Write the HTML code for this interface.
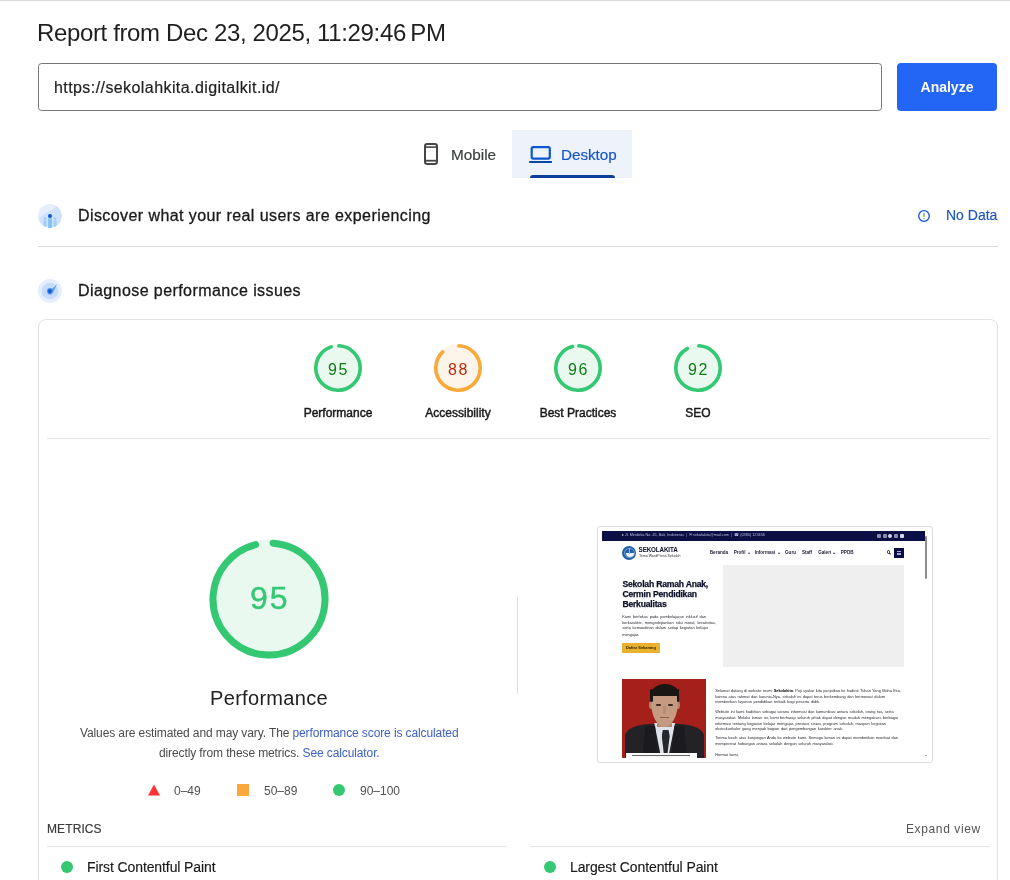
<!DOCTYPE html>
<html><head><meta charset="utf-8">
<style>
*{margin:0;padding:0;box-sizing:border-box}
html,body{width:1010px;height:880px;overflow:hidden;background:#fff;}body{will-change:transform;font-family:"Liberation Sans",sans-serif;color:#1f1f1f}
.a{position:absolute;white-space:nowrap}
#topline{left:0;top:0;width:1010px;height:1px;background:#d9d9d9}
#title{left:37px;top:18px;font-size:24px;line-height:30px;letter-spacing:-0.36px;color:#1f1f1f}
#input{left:38px;top:63px;width:844px;height:48px;border:1px solid #747775;border-radius:3.5px}
#url{left:54px;top:79px;font-size:16px;line-height:18px;letter-spacing:0.42px;color:#1f1f1f;-webkit-text-stroke:0.2px #1f1f1f}
#btn{left:897px;top:63px;width:100px;height:48px;background:#2365f5;border-radius:4px}
#btntxt{left:897px;top:79.4px;width:100px;text-align:center;font-size:14px;line-height:16px;font-weight:bold;color:#fff}
#tabbg{left:512px;top:130px;width:120px;height:48px;background:#eef3fb}
#tabline{left:530px;top:175px;width:85px;height:3px;background:#0d3f98;border-radius:3px 3px 0 0}
#mob{left:451px;top:147px;font-size:15.3px;line-height:16px;color:#3c3f3e;-webkit-text-stroke:0.2px #3c3f3e}
#desk{left:561px;top:147px;font-size:15.2px;line-height:16px;color:#1656c9;-webkit-text-stroke:0.2px #1656c9}
.sect{font-size:16px;line-height:20px;letter-spacing:0.42px;color:#1a1a1a;-webkit-text-stroke:0.3px #1a1a1a}
#nodata{left:946px;top:207px;font-size:14px;line-height:16px;color:#1b55c4;-webkit-text-stroke:0.15px #1b55c4}
#div1{left:38px;top:246px;width:960px;height:1px;background:#dadce0}
#card{left:38px;top:319px;width:960px;height:600px;border:1px solid #e2e2e2;border-radius:8px}
#div2{left:47px;top:438px;width:943px;height:1px;background:#e5e5e5}
.glabel{font-size:12px;line-height:14px;color:#1a1a1a;text-align:center;width:120px;-webkit-text-stroke:0.45px #1a1a1a}
.gnum{font-size:16px;line-height:18px;letter-spacing:1.5px}
#vdiv{left:517px;top:597px;width:1px;height:97px;background:#e0e0e0}
#ptitle{left:169px;top:686px;width:200px;text-align:center;font-size:20px;line-height:24px;letter-spacing:0.3px;color:#212121}
.desc{font-size:12px;line-height:20px;letter-spacing:-0.11px;color:#4a4a4a}
.desc span{color:#3d60c4}
.leg{font-size:12px;line-height:14px;color:#505050}
#metrics{left:47px;top:822px;font-size:12px;line-height:14px;letter-spacing:0.1px;color:#3c3c3c;-webkit-text-stroke:0.2px #3c3c3c}
#expand{left:906px;top:822px;font-size:12px;line-height:14px;letter-spacing:0.62px;color:#555}
#mdivL{left:47px;top:846px;width:459px;height:1px;background:#e5e5e5}
#mdivR{left:530px;top:846px;width:460px;height:1px;background:#e5e5e5}
.dot{width:12px;height:12px;border-radius:50%;background:#33c871}
.mname{font-size:14px;line-height:16px;letter-spacing:-0.1px;color:#1a1a1a;-webkit-text-stroke:0.15px #1a1a1a}
/* thumbnail */
#thumb{left:597px;top:526px;width:336px;height:237px;border:1px solid #dcdcdc;border-radius:3px;background:#fff;overflow:hidden}
.t{position:absolute;white-space:nowrap}
.tb{font-size:3.8px;line-height:4.5px;color:#b9bdd8;text-align-last:justify}
.nav{font-size:4.6px;line-height:5px;font-weight:bold;color:#23263a;text-align-last:justify}
.hh{font-size:8.6px;line-height:10px;font-weight:bold;color:#0b0f26;text-align-last:justify;letter-spacing:-0.2px;-webkit-text-stroke:0.25px #0b0f26}
.pp{font-size:3.9px;line-height:5px;color:#26282e;text-align-last:justify}
.pp b{color:#000}
</style></head><body>
<div class="a" id="topline"></div>
<div class="a" id="title">Report from Dec 23, 2025, 11:29:46&#8239;PM</div>
<div class="a" id="input"></div>
<div class="a" id="url">https://sekolahkita.digitalkit.id/</div>
<div class="a" id="btn"></div>
<div class="a" id="btntxt">Analyze</div>

<div class="a" id="tabbg"></div>
<div class="a" id="tabline"></div>
<svg class="a" style="left:422px;top:142px" width="18" height="24" viewBox="0 0 18 24">
 <rect x="3" y="2" width="12" height="20" rx="2.2" fill="none" stroke="#444746" stroke-width="2"/>
 <rect x="3" y="4.3" width="12" height="1.6" fill="#444746"/>
 <rect x="3" y="17.8" width="12" height="1.8" fill="#444746"/>
</svg>
<div class="a" id="mob">Mobile</div>
<svg class="a" style="left:528px;top:145px" width="26" height="20" viewBox="0 0 26 20">
 <rect x="3.7" y="2.2" width="18.1" height="11.4" rx="1.5" fill="none" stroke="#0b57d0" stroke-width="2.2"/>
 <rect x="1.2" y="16" width="22.7" height="2" fill="#0a47ad"/>
</svg>
<div class="a" id="desk">Desktop</div>

<!-- section icons -->
<svg class="a" style="left:38px;top:204px" width="24" height="24" viewBox="0 0 24 24">
 <defs><clipPath id="c1"><circle cx="12" cy="12" r="12"/></clipPath></defs>
 <g clip-path="url(#c1)">
 <circle cx="12" cy="12" r="12" fill="#d0e2fb"/>
 <path d="M0 0 H19 C17 4 15 6 12 7 C8 8 4 11 0 16 Z" fill="#e4eefc"/>
 <rect x="10.2" y="14.3" width="3.6" height="10" fill="#7fc1ef"/>
 <rect x="5.4" y="16.6" width="3.1" height="6" fill="#9fd0f2"/>
 <rect x="15.5" y="16.6" width="3.1" height="6" fill="#9fd0f2"/>
 <circle cx="7" cy="14.6" r="1.4" fill="#9fd0f2"/>
 <circle cx="17" cy="14.6" r="1.4" fill="#9fd0f2"/>
 <circle cx="12" cy="11.9" r="2" fill="#0b57d0"/>
 </g>
</svg>
<svg class="a" style="left:38px;top:279px" width="24" height="24" viewBox="0 0 24 24">
 <circle cx="12" cy="12" r="12" fill="#e4eefd"/>
 <circle cx="12" cy="12" r="8.3" fill="#c6dbfb"/>
 <path d="M9.6 14.6 L19.2 5 L14.4 14.2 A3 3 0 0 1 9.6 14.6 Z" fill="#4f93ee"/>
 <circle cx="12" cy="12" r="3" fill="#4f93ee"/>
 <circle cx="11.9" cy="12.1" r="1.9" fill="#0b57d0"/>
</svg>
<div class="a sect" style="left:78px;top:206px">Discover what your real users are experiencing</div>
<div class="a sect" style="left:78px;top:281px">Diagnose performance issues</div>
<svg class="a" style="left:917px;top:209px" width="14" height="14" viewBox="0 0 14 14">
 <circle cx="7" cy="7" r="5.3" fill="none" stroke="#0b57d0" stroke-width="1.3"/>
 <rect x="6.35" y="3.8" width="1.3" height="4" fill="#7a8aa8"/>
 <rect x="6.35" y="8.8" width="1.3" height="1.3" fill="#7a8aa8"/>
</svg>
<div class="a" id="nodata">No Data</div>
<div class="a" id="div1"></div>

<div class="a" id="card"></div>

<!-- small gauges -->
<svg class="a" style="left:314px;top:344px" width="48" height="48" viewBox="0 0 120 120">
 <circle r="56" cx="60" cy="60" stroke-width="8" fill="#33c871" stroke="#33c871" opacity="0.1"/>
 <circle r="55.5" cx="60" cy="60" stroke-width="9" fill="none" stroke="#33c871" stroke-linecap="round" stroke-dasharray="326.78 348.72" transform="rotate(-87.677 60 60)"/>
</svg>
<div class="a gnum" style="left:328px;top:361px;color:#0b7d12">95</div>
<svg class="a" style="left:434px;top:344px" width="48" height="48" viewBox="0 0 120 120">
 <circle r="56" cx="60" cy="60" stroke-width="8" fill="#fba83a" stroke="#fba83a" opacity="0.1"/>
 <circle r="55.5" cx="60" cy="60" stroke-width="9" fill="none" stroke="#fba83a" stroke-linecap="round" stroke-dasharray="302.37 348.72" transform="rotate(-87.677 60 60)"/>
</svg>
<div class="a gnum" style="left:448px;top:361px;color:#b8290a">88</div>
<svg class="a" style="left:554px;top:344px" width="48" height="48" viewBox="0 0 120 120">
 <circle r="56" cx="60" cy="60" stroke-width="8" fill="#33c871" stroke="#33c871" opacity="0.1"/>
 <circle r="55.5" cx="60" cy="60" stroke-width="9" fill="none" stroke="#33c871" stroke-linecap="round" stroke-dasharray="330.27 348.72" transform="rotate(-87.677 60 60)"/>
</svg>
<div class="a gnum" style="left:568px;top:361px;color:#0b7d12">96</div>
<svg class="a" style="left:674px;top:344px" width="48" height="48" viewBox="0 0 120 120">
 <circle r="56" cx="60" cy="60" stroke-width="8" fill="#33c871" stroke="#33c871" opacity="0.1"/>
 <circle r="55.5" cx="60" cy="60" stroke-width="9" fill="none" stroke="#33c871" stroke-linecap="round" stroke-dasharray="316.32 348.72" transform="rotate(-87.677 60 60)"/>
</svg>
<div class="a gnum" style="left:688px;top:361px;color:#0b7d12">92</div>
<div class="a glabel" style="left:278px;top:406px">Performance</div>
<div class="a glabel" style="left:398px;top:406px">Accessibility</div>
<div class="a glabel" style="left:518px;top:406px">Best Practices</div>
<div class="a glabel" style="left:638px;top:406px">SEO</div>

<div class="a" id="div2"></div>

<!-- big gauge -->
<svg class="a" style="left:209.4px;top:539.4px" width="120" height="120" viewBox="0 0 120 120">
 <circle r="56.5" cx="60" cy="60" stroke-width="6" fill="#33c871" stroke="#33c871" opacity="0.1"/>
 <circle r="56" cx="60" cy="60" stroke-width="7" fill="none" stroke="#33c871" stroke-linecap="round" stroke-dasharray="333.6 351.86" transform="rotate(-85.82 60 60)"/>
</svg>
<div class="a" style="left:250px;top:580px;font-size:32px;line-height:36px;letter-spacing:2px;color:#33c871;-webkit-text-stroke:0.4px #33c871">95</div>
<div class="a" id="ptitle">Performance</div>
<div class="a desc" style="left:80px;top:723px">Values are estimated and may vary. The <span>performance score is calculated</span></div>
<div class="a desc" style="left:159px;top:743px">directly from these metrics. <span>See calculator.</span></div>
<svg class="a" style="left:147px;top:784px" width="14" height="12" viewBox="0 0 14 12"><path d="M7 0.5 L13 11.5 L1 11.5 Z" fill="#ff3333"/></svg>
<div class="a leg" style="left:174px;top:784px">0–49</div>
<div class="a" style="left:237px;top:784px;width:12px;height:12px;background:#fba83a"></div>
<div class="a leg" style="left:264px;top:784px">50–89</div>
<div class="a" style="left:333px;top:784px;width:12px;height:12px;border-radius:50%;background:#33c871"></div>
<div class="a leg" style="left:360px;top:784px">90–100</div>

<div class="a" id="vdiv"></div>

<!-- screenshot thumbnail -->
<div class="a" id="thumb">
<div class="t" style="left:4px;top:4px;width:323px;height:10px;background:#0a0f45"></div>
<div class="t tb" style="left:23.5px;top:6.4px;width:133.39999999999998px">&#9679; Jl. Merdeka No. 45, Bali, Indonesia &nbsp;|&nbsp; &#9993; sekolakita@mail.com &nbsp;|&nbsp; &#9742; (0380) 123456</div>
<div class="t" style="left:279px;top:6.6px;width:4px;height:4px;background:#dfe2f2;border-radius:1px;opacity:0.6"></div>
<div class="t" style="left:284.5px;top:6.6px;width:4px;height:4px;background:#dfe2f2;border-radius:1px;opacity:0.6"></div>
<div class="t" style="left:290px;top:6.6px;width:4px;height:4px;background:#dfe2f2;border-radius:50%;opacity:0.95"></div>
<div class="t" style="left:295.5px;top:6.6px;width:4px;height:4px;background:#dfe2f2;border-radius:1px;opacity:0.6"></div>
<div class="t" style="left:301.5px;top:6.6px;width:4px;height:4px;background:#dfe2f2;border-radius:1px;opacity:0.95"></div>
<div class="t" style="left:327px;top:8.7px;width:2.2px;height:43px;background:#8d8d8d;border-radius:1px"></div>
<div class="t" style="left:24.4px;top:18.7px;width:14px;height:14px;border-radius:50%;background:#2460a8"></div>
<div class="t" style="left:26.2px;top:20.5px;width:10.4px;height:10.4px;border-radius:50%;border:1px solid #6f9bd0"></div>
<div class="t" style="left:27.5px;top:25.8px;width:8px;height:4px;border-radius:0 0 4px 4px;background:#f0f2f7"></div>
<div class="t" style="left:30.6px;top:21.4px;width:1.8px;height:6px;background:#e0b020"></div>
<div class="t" style="left:40.6px;top:19.3px;font-size:6.3px;line-height:7px;font-weight:bold;color:#0a0d22;letter-spacing:-0.15px">SEKOLAKITA</div>
<div class="t" style="left:41px;top:27px;font-size:3.6px;line-height:4px;color:#333;width:39px;text-align-last:justify">Tema WordPress Sekolah</div>
<div class="t nav" style="left:111.8px;top:23px;width:15.8px">Beranda</div>
<div class="t nav" style="left:135.7px;top:23px;width:13.5px">Profil &#8964;</div>
<div class="t nav" style="left:156.7px;top:23px;width:22.1px">Informasi &#8964;</div>
<div class="t nav" style="left:187px;top:23px;width:9.2px">Guru</div>
<div class="t nav" style="left:203.9px;top:23px;width:8.6px">Staff</div>
<div class="t nav" style="left:220.2px;top:23px;width:14.8px">Galeri &#8964;</div>
<div class="t nav" style="left:242.8px;top:23px;width:10.4px">PPDB</div>
<div class="t" style="left:288.6px;top:23.4px;width:3.2px;height:3.2px;border:0.9px solid #222;border-radius:50%"></div>
<div class="t" style="left:291.4px;top:26.4px;width:1.6px;height:0.9px;background:#222;transform:rotate(45deg)"></div>
<div class="t" style="left:296.3px;top:21.2px;width:9.7px;height:9.6px;background:#0a0f45"></div>
<div class="t" style="left:298.8px;top:23.8px;width:4.6px;height:4.4px;border-top:0.8px solid #a5aad0;border-bottom:0.8px solid #a5aad0"></div>
<div class="t" style="left:298.8px;top:25.8px;width:4.6px;height:0.8px;background:#a5aad0"></div>
<div class="t hh" style="left:24.4px;top:51.6px;width:82.0px">Sekolah Ramah Anak,</div>
<div class="t hh" style="left:24.4px;top:61.75px;width:71.0px">Cermin Pendidikan</div>
<div class="t hh" style="left:24.4px;top:71.9px;width:43.1px">Berkualitas</div>
<div class="t pp" style="left:24.2px;top:86.8px;width:83.8px">Kami berfokus pada pembelajaran inklusif dan</div>
<div class="t pp" style="left:24.2px;top:92.7px;width:93.8px">berkarakter, mengedepankan nilai moral, kreativitas,</div>
<div class="t pp" style="left:24.2px;top:98.4px;width:85.8px">serta kemandirian dalam setiap kegiatan belajar</div>
<div class="t pp" style="left:24.2px;top:104.5px;width:17.8px">mengajar.</div>
<div class="t" style="left:24.1px;top:115.5px;width:37.7px;height:10.6px;background:#e9b12c"></div>
<div class="t" style="left:28px;top:118.6px;width:29.5px;font-size:3.9px;line-height:4.5px;font-weight:bold;color:#2a2410;text-align-last:justify">Daftar Sekarang</div>
<div class="t" style="left:124.9px;top:37.9px;width:181.3px;height:101.8px;background:#efefef"></div>
<div class="t" style="left:24.2px;top:151.5px;width:84.3px;height:79px;background:#a51f1b;overflow:hidden">
<div class="t" style="left:3px;top:45px;width:79px;height:40px;border-radius:26px 26px 0 0/12px 12px 0 0;background:#232327"></div>
<div class="t" style="left:32px;top:44px;width:21px;height:34px;background:#dfe3e9;clip-path:polygon(0 0,100% 0,68% 100%,32% 100%)"></div>
<div class="t" style="left:20px;top:47px;width:16px;height:33px;background:#1b1b1f;clip-path:polygon(20% 0,80% 0,100% 100%,0 100%)"></div>
<div class="t" style="left:49px;top:47px;width:16px;height:33px;background:#1b1b1f;clip-path:polygon(20% 0,80% 0,100% 100%,0 100%)"></div>
<div class="t" style="left:39.5px;top:51px;width:8px;height:26px;background:#25272b;clip-path:polygon(15% 0,85% 0,100% 25%,70% 100%,30% 100%,0 25%)"></div>
<div class="t" style="left:35px;top:36px;width:15px;height:12px;background:#b7886c"></div>
<div class="t" style="left:27px;top:22px;width:4px;height:8px;border-radius:50%;background:#b58468"></div>
<div class="t" style="left:54px;top:22px;width:4px;height:8px;border-radius:50%;background:#b58468"></div>
<div class="t" style="left:29px;top:9px;width:27px;height:39px;border-radius:44% 44% 50% 50%/35% 35% 65% 65%;background:#c49a80"></div>
<div class="t" style="left:28.5px;top:5px;width:28px;height:12px;border-radius:14px 14px 2px 2px/10px 10px 2px 2px;background:#1a1613"></div>
<div class="t" style="left:28px;top:10px;width:2.6px;height:13px;border-radius:2px;background:#1a1613"></div>
<div class="t" style="left:54.5px;top:10px;width:2.6px;height:13px;border-radius:2px;background:#1a1613"></div>
<div class="t" style="left:34px;top:25.5px;width:5px;height:1.6px;border-radius:1px;background:#3a2a22"></div>
<div class="t" style="left:45.5px;top:25.5px;width:5px;height:1.6px;border-radius:1px;background:#3a2a22"></div>
<div class="t" style="left:40.5px;top:27px;width:3px;height:8px;background:#b48469;opacity:0.6"></div>
<div class="t" style="left:37.5px;top:38.5px;width:9px;height:1.2px;background:#8e5e4c"></div>
<div class="t" style="left:4px;top:74.5px;width:70.5px;height:6px;background:#fafafa"></div>
<div class="t" style="left:10px;top:76px;width:58px;height:1.5px;background:#666"></div>
</div>
<div class="t pp" style="left:117.2px;top:160.9px;width:185.8px">Selamat datang di website resmi <b>Sekolakita</b>. Puji syukur kita panjatkan ke hadirat Tuhan Yang Maha Esa,</div>
<div class="t pp" style="left:117.2px;top:166.6px;width:169.8px">karena atas rahmat dan karunia-Nya, sekolah ini dapat terus berkembang dan berinovasi dalam</div>
<div class="t pp" style="left:117.2px;top:172.0px;width:104.8px">memberikan layanan pendidikan terbaik bagi peserta didik.</div>
<div class="t pp" style="left:117.2px;top:181.8px;width:178.4px">Website ini kami hadirkan sebagai sarana informasi dan komunikasi antara sekolah, orang tua, serta</div>
<div class="t pp" style="left:117.2px;top:187.8px;width:182.8px">masyarakat. Melalui laman ini, kami berharap seluruh pihak dapat dengan mudah mengakses berbagai</div>
<div class="t pp" style="left:117.2px;top:193.7px;width:170.8px">informasi tentang kegiatan belajar mengajar, prestasi siswa, program sekolah, maupun kegiatan</div>
<div class="t pp" style="left:117.2px;top:199.4px;width:127.8px">ekstrakurikuler yang menjadi bagian dari pengembangan karakter anak.</div>
<div class="t pp" style="left:117.2px;top:208.4px;width:182.8px">Terima kasih atas kunjungan Anda ke website kami. Semoga laman ini dapat memberikan manfaat dan</div>
<div class="t pp" style="left:117.2px;top:214.4px;width:118.5px">mempererat hubungan antara sekolah dengan seluruh masyarakat.</div>
<div class="t pp" style="left:117.2px;top:224.7px;width:23.5px">Hormat kami,</div>
<div class="t" style="left:327px;top:227.5px;width:0;height:0;border-left:1.3px solid transparent;border-right:1.3px solid transparent;border-top:1.5px solid #777"></div>
</div>

<div class="a" id="metrics">METRICS</div>
<div class="a" id="expand">Expand view</div>
<div class="a" id="mdivL"></div>
<div class="a" id="mdivR"></div>
<div class="a dot" style="left:61px;top:861px"></div>
<div class="a mname" style="left:87px;top:859px">First Contentful Paint</div>
<div class="a dot" style="left:544px;top:861px"></div>
<div class="a mname" style="left:570px;top:859px">Largest Contentful Paint</div>
</body></html>
